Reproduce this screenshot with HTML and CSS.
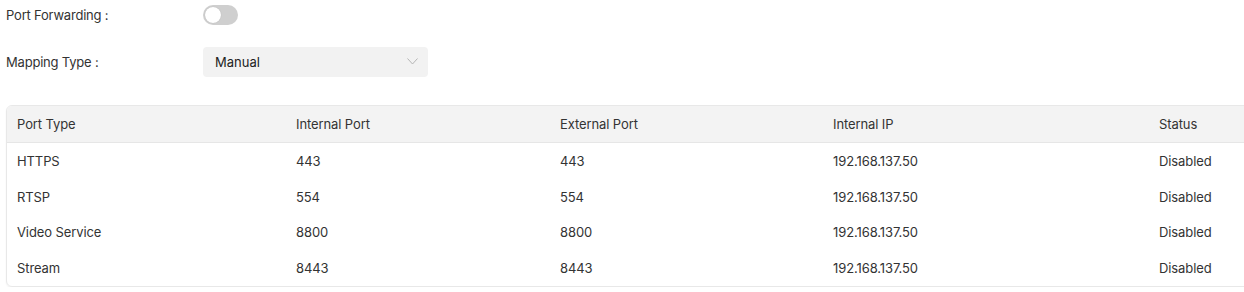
FILE: index.html
```html
<!DOCTYPE html>
<html>
<head>
<meta charset="utf-8">
<link rel="stylesheet" href="styles.css">
</head>
<body>
<div class="page">
  <div class="form-row row-toggle">
    <div class="label">Port Forwarding :</div>
    <div class="toggle"><span class="knob"></span></div>
  </div>
  <div class="form-row row-select">
    <div class="label">Mapping Type :</div>
    <div class="select">
      <span>Manual</span>
      <svg class="chev" width="11" height="7" viewBox="0 0 11 7"><path d="M0.5 0.5 L5.5 6 L10.5 0.5" fill="none" stroke="#b5b5b5" stroke-width="1"/></svg>
    </div>
  </div>
  <div class="table">
    <div class="tr th">
      <div>Port Type</div><div>Internal Port</div><div>External Port</div><div>Internal IP</div><div>Status</div>
    </div>
    <div class="tr">
      <div>HTTPS</div><div>443</div><div>443</div><div>192.168.137.50</div><div>Disabled</div>
    </div>
    <div class="tr">
      <div>RTSP</div><div>554</div><div>554</div><div>192.168.137.50</div><div>Disabled</div>
    </div>
    <div class="tr">
      <div>Video Service</div><div>8800</div><div>8800</div><div>192.168.137.50</div><div>Disabled</div>
    </div>
    <div class="tr">
      <div>Stream</div><div>8443</div><div>8443</div><div>192.168.137.50</div><div>Disabled</div>
    </div>
  </div>
</div>
</body>
</html>
```

FILE: styles.css
```css
html, body {
  margin: 0;
  padding: 0;
  background: #fff;
  overflow: hidden;
}
body {
  font-family: Inter, "Noto Sans", sans-serif;
  font-size: 13px;
  color: #333;
}
.page {
  padding-left: 6px;
  width: 1260px;
}
.form-row {
  display: flex;
  align-items: center;
}
.label {
  width: 197px;
  letter-spacing: -0.2px;
}
.row-toggle {
  height: 29px;
}
.toggle {
  width: 35px;
  height: 20px;
  border-radius: 10px;
  background: #cfcfcf;
  position: relative;
  margin-top: 1px;
}
.knob {
  position: absolute;
  left: 2px;
  top: 2px;
  width: 16px;
  height: 16px;
  border-radius: 50%;
  background: #fff;
  box-shadow: 0 0 1px rgba(0,0,0,0.2);
}
.row-select {
  margin-top: 18px;
  height: 30px;
}
.select {
  box-sizing: border-box;
  width: 225px;
  height: 30px;
  padding: 0 10px 0 12px;
  background: #f2f2f2;
  border-radius: 4px;
  display: flex;
  align-items: center;
  justify-content: space-between;
  color: #222;
}
.chev {
  margin-top: -2px;
}
.table {
  margin-top: 28px;
  width: 1260px;
  border: 1px solid #e8e8e8;
  border-radius: 6px;
  overflow: hidden;
  box-shadow: 0 1px 2px rgba(0,0,0,0.06);
}
.tr {
  display: grid;
  grid-template-columns: 279px 264px 273px 326px 1fr;
  height: 35.75px;
  align-items: center;
  letter-spacing: -0.1px;
}
.tr > div {
  padding-left: 10px;
}
.th {
  background: #f3f3f3;
  height: 36px;
  border-bottom: 1px solid #e6e6e6;
}
```
